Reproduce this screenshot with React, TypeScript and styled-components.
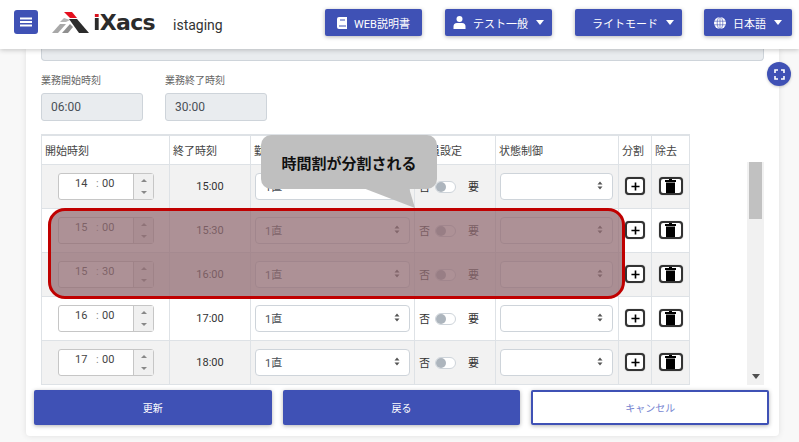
import React from "react";
import styled, { createGlobalStyle } from "styled-components";

const Global = createGlobalStyle`
  html, body { margin: 0; padding: 0; background: #f8f8f8; }
  body { width: 799px; height: 442px; overflow: hidden; font-family: Roboto, "Noto Sans CJK JP", sans-serif; color: #333; }
  * { box-sizing: border-box; }
`;

const Page = styled.div`
  width: 799px;
  height: 442px;
  display: flex;
  flex-direction: column;
  overflow: hidden;
`;

const Header = styled.header`
  position: relative;
  z-index: 5;
  flex: 0 0 49px;
  height: 49px;
  background: #fff;
  box-shadow: 0 1px 5px rgba(0, 0, 0, 0.22);
  display: flex;
  align-items: flex-start;
  padding: 9px 7px 0 14px;
`;

const MenuButton = styled.button`
  width: 24px;
  height: 24px;
  margin-top: 1px;
  border: 0;
  border-radius: 3px;
  background: #3f51b5;
  color: #fff;
  display: flex;
  align-items: center;
  justify-content: center;
  padding: 0;
`;

const Logo = styled.div`
  width: 104px;
  height: 24px;
  margin: 0 0 0 14px;
  display: flex;
  align-items: flex-end;
  gap: 4px;
`;

const LogoWord = styled.span`
  font-family: "DejaVu Sans", sans-serif;
  font-weight: 700;
  font-size: 22px;
  line-height: 22px;
  letter-spacing: -0.7px;
  color: #2b2b2b;
  position: relative;
  top: 1px;
`;

const LogoDot = styled.span`
  background: linear-gradient(#d8101c 0 7.5px, #2b2b2b 7.5px 100%);
  -webkit-background-clip: text;
  background-clip: text;
  -webkit-text-fill-color: transparent;
`;

const Tenant = styled.span`
  margin: 8px 0 0 17px;
  font-size: 14px;
  line-height: 17px;
  color: #333;
  width: 152px;
`;

const NavButton = styled.button<{ $w: number; $gap: number; $lead?: number }>`
  width: ${(p) => p.$w}px;
  height: 27px;
  margin-right: ${(p) => p.$gap}px;
  border: 0;
  border-radius: 2px;
  background: #3f51b5;
  color: #fff;
  font-family: inherit;
  font-size: 11px;
  box-shadow: 0 1px 4px rgba(0, 0, 0, 0.3);
  display: flex;
  align-items: center;
  justify-content: center;
  gap: 7px;
  padding: 0 0 0 ${(p) => p.$lead ?? 0}px;
  white-space: nowrap;
`;

const Caret = styled.i`
  width: 0;
  height: 0;
  border-left: 4px solid transparent;
  border-right: 4px solid transparent;
  border-top: 5px solid #fff;
  margin-left: 1px;
`;

const Card = styled.main`
  position: relative;
  flex: 0 0 387px;
  width: 753px;
  margin-left: 26px;
  background: #fff;
  border-radius: 0 0 4px 4px;
  box-shadow: 0 0 6px rgba(0, 0, 0, 0.1);
  padding: 0 15px;
  display: flex;
  flex-direction: column;
`;

const GreyBar = styled.div`
  height: 12px;
  background: #e9ecef;
  border: 1px solid #ced4da;
  border-top: 0;
  border-radius: 0 0 4px 4px;
`;

const TimeFields = styled.div`
  display: flex;
  gap: 22px;
  margin-top: 13px;
`;

const Field = styled.div`
  width: 102px;
  display: flex;
  flex-direction: column;
  gap: 6px;
`;

const FieldLabel = styled.label`
  font-size: 10px;
  line-height: 13px;
  color: #666;
`;

const ReadOnly = styled.div`
  height: 28px;
  background: #e9ecef;
  border: 1px solid #ced4da;
  border-radius: 3px;
  font-size: 12px;
  line-height: 26px;
  padding-left: 9px;
  color: #495057;
`;

const FullscreenButton = styled.button`
  position: absolute;
  left: 741px;
  top: 13px;
  width: 24px;
  height: 24px;
  border: 0;
  border-radius: 50%;
  background: #3f51b5;
  padding: 0;
  display: flex;
  align-items: center;
  justify-content: center;
  box-shadow: 0 1px 3px rgba(0, 0, 0, 0.2);
`;

const TableArea = styled.div`
  position: relative;
  height: 251px;
  margin-top: 13px;
  display: flex;
  justify-content: space-between;
`;

const TableClip = styled.div`
  width: 649px;
  height: 251px;
  overflow: hidden;
`;

const Table = styled.table`
  width: 648px;
  table-layout: fixed;
  border-collapse: collapse;
  font-size: 11px;
  color: #333;
`;

const Th = styled.th`
  height: 29px;
  padding: 0 0 0 3px;
  border: 1px solid #dee2e6;
  border-top-width: 2px;
  text-align: left;
  font-weight: 400;
  font-size: 11px;
  color: #444;
  white-space: nowrap;
`;

const Row = styled.tr<{ $odd: boolean }>`
  height: 44px;
  background: ${(p) => (p.$odd ? "#f2f2f2" : "#fff")};
`;

const Td = styled.td<{ $center?: boolean }>`
  border: 1px solid #dee2e6;
  padding: 0;
  text-align: ${(p) => (p.$center ? "center" : "left")};
  vertical-align: middle;
`;

const TimeInput = styled.div`
  width: 96px;
  height: 27px;
  margin-left: 16px;
  background: #fff;
  border: 1px solid #c6c6c6;
  border-radius: 3px;
  display: flex;
`;

const TimeText = styled.div`
  flex: 1;
  display: flex;
  font-size: 11px;
  line-height: 19px;
  padding-left: 16px;
  color: #444;
`;

const Hour = styled.span`
  width: 21px;
`;

const Colon = styled.span`
  width: 6px;
  color: #888;
`;

const Spin = styled.div`
  width: 20px;
  border-left: 1px solid #c6c6c6;
  background: #f0f0f0;
  display: flex;
  flex-direction: column;
  align-items: center;
  justify-content: center;
  gap: 9px;
`;

const SpinUp = styled.i`
  border-left: 3px solid transparent;
  border-right: 3px solid transparent;
  border-bottom: 3px solid #888;
`;

const SpinDown = styled.i`
  border-left: 3px solid transparent;
  border-right: 3px solid transparent;
  border-top: 3px solid #888;
`;

const SelectBox = styled.div<{ $w: number }>`
  width: ${(p) => p.$w}px;
  height: 27px;
  margin-left: 4px;
  background: #fff;
  border: 1px solid #ced4da;
  border-radius: 4px;
  padding: 0 9px 0 9px;
  display: flex;
  align-items: center;
  justify-content: space-between;
  font-size: 11px;
  color: #495057;
`;

const UpDown = styled.span`
  margin-left: auto;
  display: flex;
  flex-direction: column;
  margin-top: -1px;
`;

const ToggleCell = styled.div`
  display: flex;
  align-items: center;
  padding-left: 4px;
  font-size: 11px;
  color: #333;
`;

const Toggle = styled.span`
  width: 21px;
  height: 12px;
  margin: 1px 12px 0 5px;
  background: #fff;
  border: 1px solid #ced4da;
  border-radius: 6px;
  position: relative;
  display: block;
  &::after {
    content: "";
    position: absolute;
    left: 0;
    top: 0;
    width: 10px;
    height: 10px;
    border-radius: 50%;
    background: #adb5bd;
  }
`;

const IconBtn = styled.span<{ $w: number }>`
  width: ${(p) => p.$w}px;
  height: 18px;
  margin: 0 auto;
  border: 2px solid #333;
  border-radius: 4px;
  background: #fff;
  display: flex;
  align-items: center;
  justify-content: center;
  box-shadow: 0 0 1px rgba(0, 0, 0, 0.5);
`;

const Scrollbar = styled.div`
  width: 17px;
  height: 223px;
  margin-top: 28px;
  background: #f1f1f1;
  display: flex;
  flex-direction: column;
  justify-content: space-between;
  align-items: center;
`;

const Thumb = styled.div`
  width: 13px;
  height: 57px;
  background: #c1c1c1;
`;

const ScrollArrow = styled.i`
  margin-bottom: 6px;
  border-left: 4px solid transparent;
  border-right: 4px solid transparent;
  border-top: 5px solid #505050;
`;

const Overlay = styled.div`
  position: absolute;
  left: 7px;
  top: 74px;
  width: 577px;
  height: 91px;
  border: 3px solid #c00000;
  border-radius: 17px;
  background: rgba(146, 108, 115, 0.75);
`;

const Callout = styled.div`
  position: absolute;
  left: 220px;
  top: 1px;
  width: 176px;
  height: 54px;
  background: #bfbfbf;
  border-radius: 10px;
  display: flex;
  align-items: center;
  justify-content: center;
  font-size: 15px;
  font-weight: 700;
  color: #111;
`;

const CalloutTail = styled.svg`
  position: absolute;
  left: 320px;
  top: 50px;
`;

const Actions = styled.div`
  display: grid;
  grid-template-columns: repeat(3, 1fr);
  gap: 11px;
  margin: 5px -5px 0 -7px;
`;

const Action = styled.button<{ $outline?: boolean }>`
  height: 35px;
  border: ${(p) => (p.$outline ? "2px solid #3f51b5" : "0")};
  border-radius: 2px;
  background: ${(p) => (p.$outline ? "#fff" : "#3f51b5")};
  color: ${(p) => (p.$outline ? "#7583d0" : "#fff")};
  font-family: inherit;
  font-size: 10px;
  box-shadow: 0 1px 4px rgba(0, 0, 0, 0.3);
  padding: 0;
`;

const rows = [
  { h: "14", m: "00", end: "15:00" },
  { h: "15", m: "00", end: "15:30" },
  { h: "15", m: "30", end: "16:00" },
  { h: "16", m: "00", end: "17:00" },
  { h: "17", m: "00", end: "18:00" },
];

const Arrows = () => (
  <UpDown>
    <svg width="6" height="9" viewBox="0 0 6 9">
      <path d="M3 0.5 L5.5 3.5 H0.5Z M3 8.5 L5.5 5.5 H0.5Z" fill="#555" />
    </svg>
  </UpDown>
);

export default function App() {
  return (
    <Page>
      <Global />
      <Header>
        <MenuButton aria-label="menu">
          <svg width="12" height="10" viewBox="0 0 12 10">
            <path d="M0 0.5h12v2H0zM0 4h12v2H0zM0 7.5h12v2H0z" fill="#fff" />
          </svg>
        </MenuButton>
        <Logo>
          <svg width="37" height="21" viewBox="0 0 37 21">
            <path d="M0 21 L6 21 L14 12 L8 12Z" fill="#a8a8a8" />
            <path d="M10 21 L16 21 L21 15 L18 12Z" fill="#8f8f8f" />
            <path d="M8 10 L12 6 L18 8 L14 10Z" fill="#b5b5b5" />
            <path d="M17 7 L25 7 L37 21 L27 21Z" fill="#2b2b2b" />
            <path d="M12 0 L20 0 L25 6 L18 6Z" fill="#e5101f" />
          </svg>
          <LogoWord>
            <LogoDot>i</LogoDot>Xacs
          </LogoWord>
        </Logo>
        <Tenant>istaging</Tenant>
        <NavButton $w={97} $gap={23}>
          <svg width="10" height="12" viewBox="0 0 10 12">
            <path d="M2 0h8v12H2a2 2 0 0 1-2-2V2a2 2 0 0 1 2-2Z" fill="#fff" />
            <path d="M2 9h7M3 3h5" stroke="#3f51b5" strokeWidth="1" />
          </svg>
          WEB説明書
        </NavButton>
        <NavButton $w={107} $gap={23}>
          <svg width="13" height="13" viewBox="0 0 12 13">
            <circle cx="6" cy="3" r="3" fill="#fff" />
            <path d="M0 13v-2.5A3.5 3.5 0 0 1 3.5 7h5a3.5 3.5 0 0 1 3.5 3.5V13Z" fill="#fff" />
          </svg>
          テスト一般
          <Caret />
        </NavButton>
        <NavButton $w={107} $gap={22} $lead={9}>
          ライトモード
          <Caret />
        </NavButton>
        <NavButton $w={88} $gap={0}>
          <svg width="12" height="12" viewBox="0 0 12 12">
            <circle cx="6" cy="6" r="6" fill="#fff" />
            <path d="M0 4.2h12M0 7.8h12M6 0v12" stroke="#3f51b5" strokeWidth="0.6" />
            <ellipse cx="6" cy="6" rx="2.8" ry="6" fill="none" stroke="#3f51b5" strokeWidth="0.6" />
          </svg>
          日本語
          <Caret />
        </NavButton>
      </Header>
      <Card>
        <GreyBar />
        <TimeFields>
          <Field>
            <FieldLabel>業務開始時刻</FieldLabel>
            <ReadOnly>06:00</ReadOnly>
          </Field>
          <Field>
            <FieldLabel>業務終了時刻</FieldLabel>
            <ReadOnly>30:00</ReadOnly>
          </Field>
        </TimeFields>
        <FullscreenButton aria-label="fullscreen">
          <svg width="11" height="11" viewBox="0 0 11 11" fill="none" stroke="#fff" strokeWidth="1.6">
            <path d="M1 4V1h3M7 1h3v3M10 7v3H7M4 10H1V7" />
          </svg>
        </FullscreenButton>
        <TableArea>
          <TableClip>
            <Table>
              <colgroup>
                <col width="128" />
                <col width="81" />
                <col width="164" />
                <col width="81" />
                <col width="123" />
                <col width="33" />
                <col width="38" />
              </colgroup>
              <thead>
                <tr>
                  <Th>開始時刻</Th>
                  <Th>終了時刻</Th>
                  <Th>勤務体系</Th>
                  <Th>人員設定</Th>
                  <Th>状態制御</Th>
                  <Th>分割</Th>
                  <Th>除去</Th>
                </tr>
              </thead>
              <tbody>
                {rows.map((r, i) => (
                  <Row key={i} $odd={i % 2 === 0}>
                    <Td>
                      <TimeInput>
                        <TimeText>
                          <Hour>{r.h}</Hour>
                          <Colon>:</Colon>
                          <span>{r.m}</span>
                        </TimeText>
                        <Spin>
                          <SpinUp />
                          <SpinDown />
                        </Spin>
                      </TimeInput>
                    </Td>
                    <Td $center>{r.end}</Td>
                    <Td>
                      <SelectBox $w={155}>
                        1直
                        <Arrows />
                      </SelectBox>
                    </Td>
                    <Td>
                      <ToggleCell>
                        否
                        <Toggle />
                        要
                      </ToggleCell>
                    </Td>
                    <Td>
                      <SelectBox $w={113}>
                        <Arrows />
                      </SelectBox>
                    </Td>
                    <Td>
                      <IconBtn $w={20}>
                        <svg width="9" height="9" viewBox="0 0 10 10">
                          <path d="M5 0.5v9M0.5 5h9" stroke="#000" strokeWidth="1.8" />
                        </svg>
                      </IconBtn>
                    </Td>
                    <Td>
                      <IconBtn $w={24}>
                        <svg width="11" height="14" viewBox="0 0 11 14">
                          <path d="M4 0h3v1h4v2H0V1h4Z M1 3.5h9V14H1Z" fill="#000" />
                        </svg>
                      </IconBtn>
                    </Td>
                  </Row>
                ))}
              </tbody>
            </Table>
          </TableClip>
          <Scrollbar>
            <Thumb />
            <ScrollArrow />
          </Scrollbar>
          <Overlay />
          <Callout>時間割が分割される</Callout>
          <CalloutTail width="56" height="26" viewBox="0 0 56 26">
            <path d="M2 4 L48 4 L54 24 Z" fill="#bfbfbf" />
          </CalloutTail>
        </TableArea>
        <Actions>
          <Action>更新</Action>
          <Action>戻る</Action>
          <Action $outline>キャンセル</Action>
        </Actions>
      </Card>
    </Page>
  );
}
